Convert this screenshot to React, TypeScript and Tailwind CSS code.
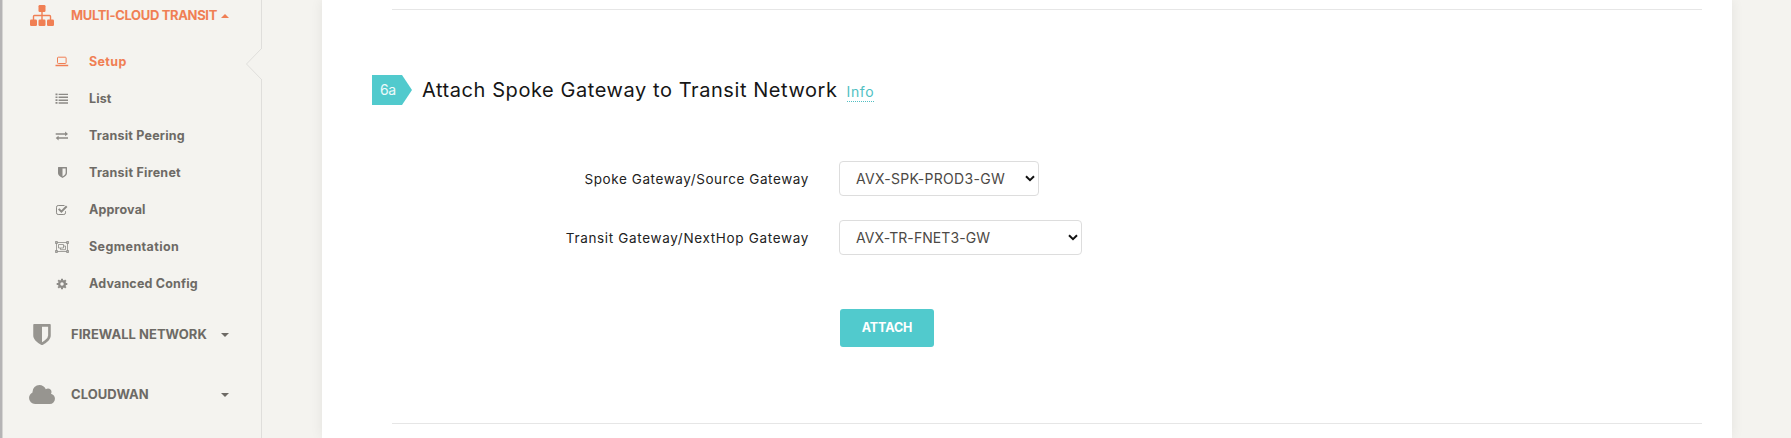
import React, { ReactNode } from 'react';

function Sitemap() {
  return (
    <svg width="26" height="22" viewBox="0 0 26 22" fill="currentColor">
      <rect x="9.5" y="0" width="7" height="7" rx="1.2" />
      <rect x="1" y="14.5" width="7" height="6.5" rx="1.2" />
      <rect x="9.5" y="14.5" width="7" height="6.5" rx="1.2" />
      <rect x="18" y="14.5" width="7" height="6.5" rx="1.2" />
      <path d="M4.5 15v-3.6q0-.9.9-.9h15.2q.9 0 .9.9V15M13 6v9" fill="none" stroke="currentColor" strokeWidth="1.4" />
    </svg>
  );
}

function Shield({ w, h }: { w: number; h: number }) {
  return (
    <svg width={w} height={h} viewBox="0 0 1280 1536" fill="currentColor">
      <path d="M1088 832V192H640v1137q119-63 213-137 235-184 235-360zm192-768v768q0 86-33.500 170.500t-83 150-118 127.500-126.500 103-121 77.500-89.500 49.500-42.500 20q-12 6-26 6t-26-6q-16-7-42.500-20t-89.500-49.500-121-77.500-126.500-103-118-127.500-83-150T0 832V64q0-26 19-45T64 0h1152q26 0 45 19t19 45z" />
    </svg>
  );
}

function Cloud() {
  return (
    <svg width="26" height="19" viewBox="0 0 1920 1408" fill="currentColor">
      <path d="M1920 1024q0 159-112.500 271.500T1536 1408H448q-185 0-316.500-131.500T0 960q0-132 71-241.500T258 555q-2-28-2-43 0-212 150-362T768 0q158 0 286.500 88T1242 318q70-62 166-62 106 0 181 75t75 181q0 75-41 138 129 30 213 134.500t84 239.500z" />
    </svg>
  );
}

function Laptop() {
  return (
    <svg width="14" height="11" viewBox="0 0 14 11" fill="none" stroke="currentColor">
      <rect x="2.5" y="1.200" width="8.600" height="6.300" rx=".8" strokeWidth="1" />
      <path d="M.5 9.500h12.700" strokeWidth="1.500" />
    </svg>
  );
}

function List() {
  return (
    <svg width="14" height="11" viewBox="0 0 14 11" fill="currentColor">
      <path d="M.5.500h2v1.700h-2zM.5 3.400h2v1.700h-2zM.5 6.300h2V8h-2zM.5 9.100h2v1.700h-2zM3.600.700h9.400v1.400H3.600zM3.600 3.600h9.400v1.400H3.600zM3.600 6.500h9.400v1.400H3.600zM3.600 9.300h9.400v1.400H3.600z" />
    </svg>
  );
}

function Exchange() {
  return (
    <svg width="14" height="10" viewBox="0 0 14 10" fill="currentColor">
      <path d="M.7 2.200h9.400V.500L13 2.900l-2.900 2.300V3.700H.7zM13 6.300H3.600V4.800L.7 7.100l2.900 2.400V7.800H13z" />
    </svg>
  );
}

function CheckSquare() {
  return (
    <svg width="14" height="12" viewBox="0 0 14 12" fill="none" stroke="currentColor">
      <path d="M9.500 1.500H3.200Q1.500 1.500 1.500 3.200v5.600q0 1.700 1.700 1.700h5.600q1.700 0 1.700-1.700V7.200" strokeWidth="1" />
      <path d="M3.700 4.900l2.700 2.700 5.300-5.300" strokeWidth="2" />
    </svg>
  );
}

function ObjectGroup() {
  return (
    <svg width="14" height="12" viewBox="0 0 14 12" fill="none" stroke="currentColor" strokeWidth=".8">
      <path d="M1.500 1.500h11v9h-11zM3.500 3.500h5v3.500h-5zM8.500 5h2v3.700h-5V7" />
      <path d="M.4.500h2v2h-2zM11.600.500h2v2h-2zM.4 9.500h2v2h-2zM11.600 9.500h2v2h-2z" fill="#b9b8b4" />
    </svg>
  );
}

function Gear() {
  return (
    <svg width="12" height="12" viewBox="0 0 12 12" fill="none" stroke="currentColor">
      <circle cx="6" cy="6" r="2.900" strokeWidth="2.300" />
      <path d="M6 .700v1.800M6 9.500v1.800M.7 6h1.800M9.500 6h1.800M2.200 2.200l1.200 1.200M8.600 8.600l1.200 1.200M2.200 9.800l1.200-1.200M8.600 3.400l1.200-1.200" strokeWidth="2" />
    </svg>
  );
}

function Caret({ up = false }: { up?: boolean }) {
  return (
    <svg className="mt-[2px]" width="8" height="4" viewBox="0 0 8 4" fill="currentColor">
      {up ? <path d="M0 4L4 0l4 4z" /> : <path d="M0 0h8L4 4z" />}
    </svg>
  );
}

const items: { label: string; icon: ReactNode; track: string; active?: boolean }[] = [
  { label: 'Setup', icon: <Laptop />, track: 'tracking-[0.35px]', active: true },
  { label: 'List', icon: <List />, track: 'tracking-[0.1px]' },
  { label: 'Transit Peering', icon: <Exchange />, track: 'tracking-[0.22px]' },
  { label: 'Transit Firenet', icon: <Shield w={9} h={11} />, track: 'tracking-[0.24px]' },
  { label: 'Approval', icon: <CheckSquare />, track: 'tracking-[0.16px]' },
  { label: 'Segmentation', icon: <ObjectGroup />, track: 'tracking-[0.4px]' },
  { label: 'Advanced Config', icon: <Gear />, track: 'tracking-[0.18px]' },
];

function Section({ label, icon, track, open = false }: { label: string; icon: ReactNode; track: string; open?: boolean }) {
  return (
    <div className={`flex h-[60px] items-center ${open ? 'text-[#f07f54]' : 'text-[#6d6a65]'}`}>
      <span className={`ml-[26px] flex w-[26px] justify-center ${open ? 'pt-[1px]' : 'pt-[1px] text-[#979590]'}`}>{icon}</span>
      <span className={`ml-[16px] w-[150px] whitespace-nowrap text-[13px] leading-5 font-bold ${track}`}>{label}</span>
      <Caret up={open} />
    </div>
  );
}

function Select({ value, width, track }: { value: string; width: string; track: string }) {
  return (
    <div className={`flex h-[35px] items-center justify-between rounded-[4px] border border-[#dddddd] bg-white pr-[3px] pl-[16px] ${width}`}>
      <span className={`pt-[1px] text-[14px] leading-5 text-[#4c4945] ${track}`}>{value}</span>
      <svg width="10" height="7" viewBox="0 0 10 7" fill="none" stroke="#111111" strokeWidth="2">
        <path d="M1 1.200l4 3.900 4-3.900" />
      </svg>
    </div>
  );
}

export default function App() {
  return (
    <div className="flex h-[438px] w-[1791px] overflow-hidden bg-[#f4f3ef] font-['Inter',sans-serif]">
      <div className="w-[3px] shrink-0 border-r border-[#d6d5d3] bg-[#b5b4b5]" />
      <nav className="relative h-[438px] w-[259px] shrink-0 border-r border-[#dfdedb]">
        <svg className="absolute top-[48px] right-[-1px]" width="17" height="32" viewBox="0 0 17 32">
          <path d="M16 1v30" stroke="#f4f3ef" strokeWidth="2" />
          <path d="M16.500 .500L1.500 16l15 15.500" fill="none" stroke="#dfdedb" />
        </svg>
        <div className="-mt-[15px]">
          <Section label="MULTI-CLOUD TRANSIT" icon={<Sitemap />} track="tracking-[-0.34px]" open />
        </div>
        <ul className="-mt-[2px] mb-[2px]">
          {items.map((it) => (
            <li key={it.label} className={`flex h-[37px] items-center ${it.active ? 'text-[#f07f54]' : 'text-[#6d6a65]'}`}>
              <span className={`ml-[52px] flex w-[14px] justify-center ${it.active ? '' : 'text-[#8c8a86]'}`}>{it.icon}</span>
              <span className={`ml-[20px] whitespace-nowrap text-[12.5px] leading-5 font-bold ${it.track}`}>{it.label}</span>
            </li>
          ))}
        </ul>
        <Section label="FIREWALL NETWORK" icon={<Shield w={18} h={21} />} track="tracking-[0.03px]" />
        <Section label="CLOUDWAN" icon={<Cloud />} track="tracking-[0.04px]" />
      </nav>
      <main className="ml-[60px] flex h-[438px] w-[1410px] flex-col bg-white pr-[30px] pl-[50px] shadow-[0_0_12px_rgba(0,0,0,0.07)]">
        <hr className="mt-[9px] ml-[20px] h-px shrink-0 border-t-0 bg-[#e6e6e6]" />
        <header className="mt-[64px] flex h-[32px] items-center">
          <span className="flex h-[30px] w-[40px] items-center bg-[#51cacd] pl-[8px] text-[14px] leading-5 tracking-[-0.4px] text-white/90 [clip-path:polygon(0_0,75%_0,100%_50%,75%_100%,0_100%)]">6a</span>
          <h2 className="ml-[10px] whitespace-nowrap text-[20px] leading-6 font-normal tracking-[0.57px] text-[#161616]">Attach Spoke Gateway to Transit Network</h2>
          <a className="mt-[5px] ml-[9px] border-b border-dotted border-[#51bfc3] text-[14px] leading-[18px] tracking-[0.6px] text-[#51bfc3]">Info</a>
        </header>
        <div className="mt-[55px] grid grid-cols-[437px_1fr] items-center gap-x-[30px] gap-y-[24px]">
          <label className="text-right text-[13.5px] leading-5 tracking-[0.59px] text-[#222222]">Spoke Gateway/Source Gateway</label>
          <Select value="AVX-SPK-PROD3-GW" width="w-[200px]" track="tracking-[0.3px]" />
          <label className="text-right text-[13.5px] leading-5 tracking-[0.67px] text-[#222222]">Transit Gateway/NextHop Gateway</label>
          <Select value="AVX-TR-FNET3-GW" width="w-[243px]" track="tracking-[0.08px]" />
        </div>
        <button className="mt-[54px] ml-[468px] h-[38px] w-[94px] shrink-0 rounded-[3px] bg-[#51cacd] text-[12.5px] leading-5 font-bold tracking-[-0.1px] text-white">ATTACH</button>
        <hr className="mt-[76px] ml-[20px] h-px shrink-0 border-t-0 bg-[#e6e6e6]" />
      </main>
    </div>
  );
}
